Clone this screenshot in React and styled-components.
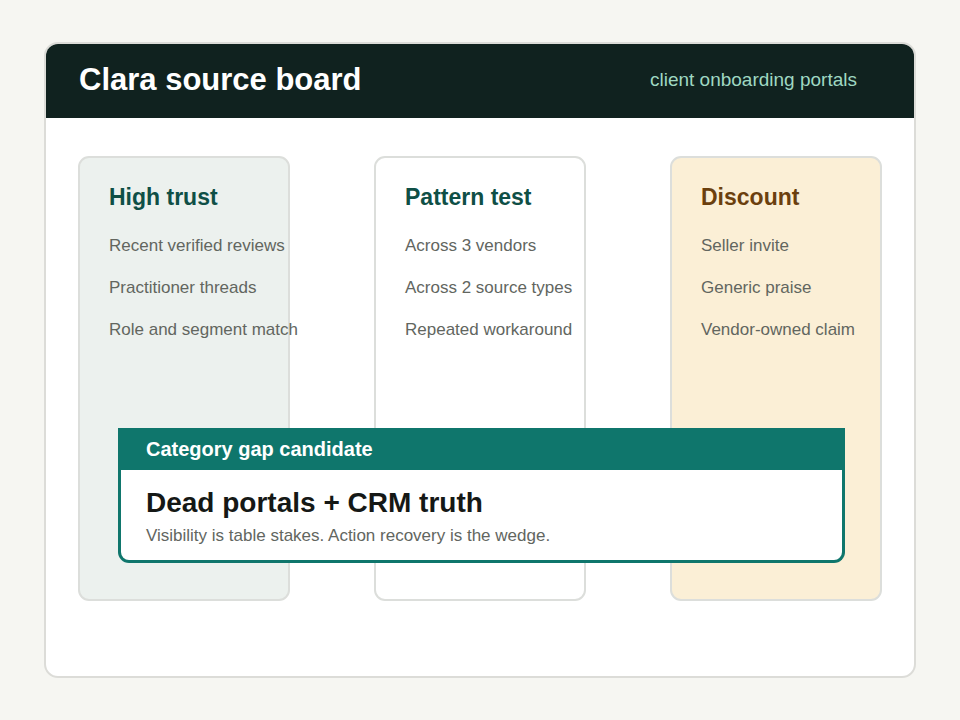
import React from "react";
import styled, { createGlobalStyle } from "styled-components";

const Global = createGlobalStyle`
  html, body { margin: 0; padding: 0; background: #f6f6f2; font-family: "Liberation Sans", Arial, sans-serif; }
`;
const Page = styled.div`width:960px;height:720px;padding:42px 44px;box-sizing:border-box;`;
const Card = styled.div`position:relative;width:872px;height:636px;box-sizing:border-box;background:#fff;border:2px solid #dcdcd8;border-radius:14px;overflow:hidden;`;
const Header = styled.div`height:76px;margin:-2px -2px 0;background:#10221f;display:flex;align-items:center;justify-content:space-between;padding:0 59px 0 35px;`;
const Title = styled.h1`margin:0;color:#fff;font-size:31px;font-weight:700;`;
const Sub = styled.div`color:#9fd8c2;font-size:19px;`;
const Cols = styled.div`display:grid;grid-template-columns:repeat(3,212px);gap:84px;padding:38px 0 0 32px;`;
const Col = styled.div`height:445px;box-sizing:border-box;border:2px solid #dcdedb;border-radius:11px;background:${p=>p.$bg};padding:26px 0 0 29px;`;
const ColHead = styled.div`font-size:23px;font-weight:700;color:${p=>p.$c};margin-bottom:14px;`;
const Item = styled.div`font-size:17px;color:#62665f;line-height:42px;white-space:nowrap;`;
const Overlay = styled.div`position:absolute;left:72px;top:384px;width:727px;height:135px;box-sizing:border-box;background:#fff;border:3px solid #0f766c;border-top:none;border-radius:0 0 11px 11px;`;
const OHead = styled.div`height:42px;margin:0 -3px;background:#0f766c;color:#fff;font-size:20px;font-weight:700;display:flex;align-items:center;padding-left:28px;`;
const OTitle = styled.div`font-size:28px;font-weight:700;color:#151816;margin:17px 0 0 25px;`;
const OSub = styled.div`font-size:17px;color:#62665f;margin:7px 0 0 25px;`;

const cols = [
  { h: "High trust", c: "#0f4f46", bg: "#ecf1ee", items: ["Recent verified reviews", "Practitioner threads", "Role and segment match"] },
  { h: "Pattern test", c: "#0f4f46", bg: "#fff", items: ["Across 3 vendors", "Across 2 source types", "Repeated workaround"] },
  { h: "Discount", c: "#6b3f0e", bg: "#fbefd6", items: ["Seller invite", "Generic praise", "Vendor-owned claim"] },
];

export default function App() {
  return (
    <Page>
      <Global />
      <Card>
        <Header><Title>Clara source board</Title><Sub>client onboarding portals</Sub></Header>
        <Cols>
          {cols.map(c => (
            <Col key={c.h} $bg={c.bg}>
              <ColHead $c={c.c}>{c.h}</ColHead>
              {c.items.map(i => <Item key={i}>{i}</Item>)}
            </Col>
          ))}
        </Cols>
        <Overlay>
          <OHead>Category gap candidate</OHead>
          <OTitle>Dead portals + CRM truth</OTitle>
          <OSub>Visibility is table stakes. Action recovery is the wedge.</OSub>
        </Overlay>
      </Card>
    </Page>
  );
}
